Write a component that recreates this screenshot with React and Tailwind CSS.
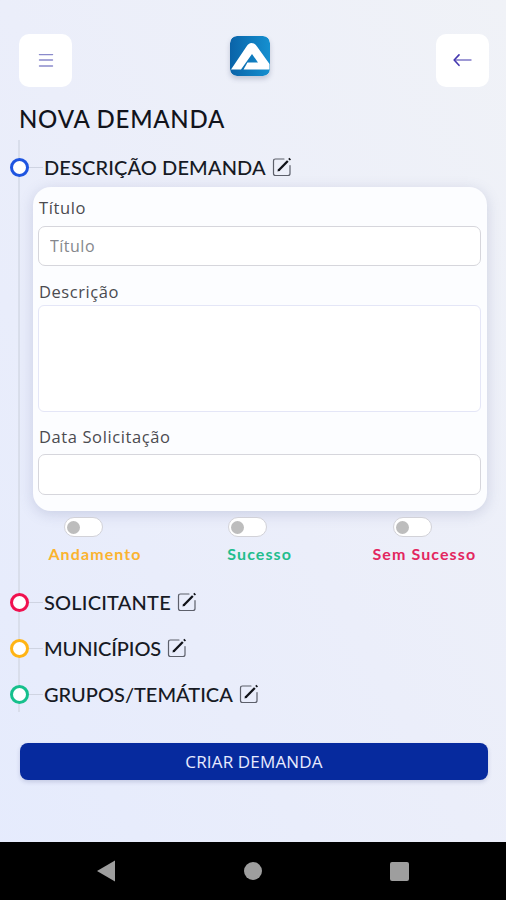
import React, { useState } from 'react';

const sections = [
  { id: 'solicitante', title: 'SOLICITANTE', ring: 'border-[#f0114f]', tracking: 'tracking-[0.2px]' },
  { id: 'municipios', title: 'MUNICÍPIOS', ring: 'border-[#ffb414]', tracking: 'tracking-[-0.1px]' },
  { id: 'grupos', title: 'GRUPOS/TEMÁTICA', ring: 'border-[#16c08c]', tracking: 'tracking-[0px]' },
];

const statusOptions = [
  { id: 'andamento', label: 'Andamento', color: 'text-[#fbb32f]' },
  { id: 'sucesso', label: 'Sucesso', color: 'text-[#22bd8d]' },
  { id: 'semSucesso', label: 'Sem Sucesso', color: 'text-[#e3265f]' },
];

const Logo = () => (
  <svg width="40" height="40" viewBox="0 0 40 40" className="mt-[2px] mr-2 rounded-[7px] shadow-[0_3px_5px_rgba(60,70,110,0.25)]">
    <defs>
      <linearGradient id="logoBg" x1="0" y1="0" x2="1" y2="0">
        <stop offset="0" stopColor="#0a63a8" />
        <stop offset="1" stopColor="#1590d0" />
      </linearGradient>
    </defs>
    <rect width="40" height="40" rx="7" fill="url(#logoBg)" />
    <path
      d="M1 33.500 16.500 10.500Q18.500 7 21.500 7Q25 7 27 10.500L39.500 28V33.500H13.500L17.500 26.500H28L22 18 11 33.500Z"
      fill="#fff"
    />
  </svg>
);

const EditIcon = () => (
  <svg width="20" height="20" viewBox="0 0 20 20" fill="none" className="ml-[6px] shrink-0">
    <path
      d="M12 2H3.500Q1.500 2 1.500 4V16.500Q1.500 18.500 3.500 18.500H16Q18 18.500 18 16.500V8.500"
      stroke="#5d606b"
      strokeWidth="1.2"
      strokeLinecap="round"
    />
    <path d="M6.500 13.500 15.800 4" stroke="#101218" strokeWidth="2.3" />
    <path d="M5.500 14.500 6 12 8 13.800Z" fill="#101218" />
    <path d="M17 2.800 18.200 1.600" stroke="#101218" strokeWidth="2.3" />
  </svg>
);

const SectionTitle = ({ title, ring, tracking }) => (
  <div className="-ml-[10px] flex h-[46px] items-center">
    <span className={`h-[19px] w-[19px] shrink-0 rounded-full border-[3px] bg-white ${ring}`} />
    <span className="mr-[1px] h-px w-[14px] bg-[#cfd4e2]" />
    <h2 className={`whitespace-nowrap text-[20px] leading-6 font-medium text-[#171a24] ${tracking}`}>{title}</h2>
    <EditIcon />
  </div>
);

const Toggle = ({ checked, onChange }) => (
  <button
    onClick={onChange}
    className={`flex h-5 w-[39px] items-center rounded-full border border-[#d2d2d8] bg-white px-[2px] ${checked ? 'justify-end' : ''}`}
  >
    <span className="h-[13px] w-[13px] rounded-full bg-[#bdbdbd]" />
  </button>
);

export default function App() {
  const [form, setForm] = useState({ titulo: '', descricao: '', data: '' });
  const [status, setStatus] = useState(null);

  const handleChange = (field, value) => {
    setForm(prevState => ({ ...prevState, [field]: value }));
  };

  return (
    <div className="flex h-[900px] w-[506px] flex-col overflow-hidden bg-linear-to-tr from-[#e5ebfd] via-[#ebeefa] to-[#f0f2f7] font-['Open_Sans','Noto_Sans',sans-serif]">
      <header className="flex items-start justify-between pt-[34px] pr-[17px] pl-[19px]">
        <button className="flex h-[53px] w-[53px] items-center justify-center rounded-[10px] bg-white">
          <svg width="16" height="14" viewBox="0 0 16 14" stroke="#8a8acb" strokeWidth="1.4" strokeLinecap="round">
            <path d="M1.500 .500h13M1.500 6h13M1.500 12h13" />
          </svg>
        </button>
        <Logo />
        <button className="flex h-[53px] w-[53px] items-center justify-center rounded-[10px] bg-white">
          <svg width="20" height="14" viewBox="0 0 20 14" fill="none" strokeLinecap="round" strokeLinejoin="round">
            <path d="M1.500 6H18" stroke="#7f78c8" strokeWidth="1.4" />
            <path d="M6 .900 1.200 6 6 11.300" stroke="#4336ae" strokeWidth="1.6" />
          </svg>
        </button>
      </header>

      <h1 className="mt-[17px] ml-[19px] h-[30px] text-[24px] leading-[30px] font-medium tracking-[0.75px] text-[#12141c] font-['Lato',sans-serif]">
        NOVA DEMANDA
      </h1>

      {/* Timeline */}
      <div className="mt-[6px] ml-[18px] h-[572px] border-l-2 border-[#d9deeb] pt-1 font-['Lato',sans-serif]">
        <SectionTitle title="DESCRIÇÃO DEMANDA" ring="border-[#1f55e0]" tracking="tracking-[0.12px]" />

        <div className="-mt-[3px] ml-[13px] h-[324px] w-[454px] rounded-[18px] bg-[#fcfdff] px-[5px] pt-[10px] font-['Open_Sans','Noto_Sans',sans-serif] text-[16px] shadow-[0_3px_14px_rgba(90,100,150,0.22)]">
          <label className="block h-[29px] pl-[1px] text-[16.5px] leading-[22px] font-medium tracking-[0.6px] text-[#4b4b50]">Título</label>
          <input
            type="text"
            placeholder="Título"
            value={form.titulo}
            onChange={(e) => handleChange('titulo', e.target.value)}
            className="block h-[40px] w-[443px] rounded-[7px] border border-[#d6d6dc] bg-white px-[11px] tracking-[0.5px] placeholder:text-[#85878c] focus:outline-none"
          />
          <label className="mt-[14px] block h-[25px] pl-[1px] text-[16.5px] leading-[24px] font-medium tracking-[0.55px] text-[#4b4b50]">Descrição</label>
          <textarea
            value={form.descricao}
            onChange={(e) => handleChange('descricao', e.target.value)}
            className="block h-[107px] w-[443px] resize-none rounded-[6px] border border-[#e4e6f7] bg-white px-3 py-2 focus:outline-none"
          />
          <label className="mt-[13px] block h-[29px] pl-[1px] text-[16.5px] leading-[24px] font-medium tracking-[0.6px] text-[#4b4b50]">Data Solicitação</label>
          <input
            type="text"
            value={form.data}
            onChange={(e) => handleChange('data', e.target.value)}
            className="block h-[41px] w-[443px] rounded-[7px] border border-[#d6d6dc] bg-white px-[11px] focus:outline-none"
          />
        </div>

        <div className="mt-[6px] ml-[12px] grid h-[62px] w-[494px] grid-cols-3">
          {statusOptions.map((option) => (
            <div key={option.id} className="w-[126px]">
              <div className="flex justify-center pr-6">
                <Toggle checked={status === option.id} onChange={() => setStatus(option.id)} />
              </div>
              <p className={`mt-[7px] text-center whitespace-nowrap text-[16px] leading-5 font-bold tracking-[1.1px] ${option.color}`}>
                {option.label}
              </p>
            </div>
          ))}
        </div>

        {sections.map((section) => (
          <SectionTitle key={section.id} {...section} />
        ))}
      </div>

      <button className="mt-[31px] ml-5 h-[37px] w-[468px] shrink-0 rounded-lg bg-[#062a9e] text-[17px] tracking-[0.15px] text-[#e8ebff] shadow-[0_2px_4px_rgba(60,70,130,0.2)]">
        CRIAR DEMANDA
      </button>

      {/* Android navigation bar */}
      <nav className="mt-auto flex h-[58px] shrink-0 items-center justify-between bg-black px-[97px]">
        <svg width="18" height="22" viewBox="0 0 18 22" fill="#9e9e9e">
          <path d="M18 0.500V21.500L0 11Z" />
        </svg>
        <span className="h-[18px] w-[18px] rounded-full bg-[#9e9e9e]" />
        <span className="h-[19px] w-[19px] rounded-[2px] bg-[#9e9e9e]" />
      </nav>
    </div>
  );
}
